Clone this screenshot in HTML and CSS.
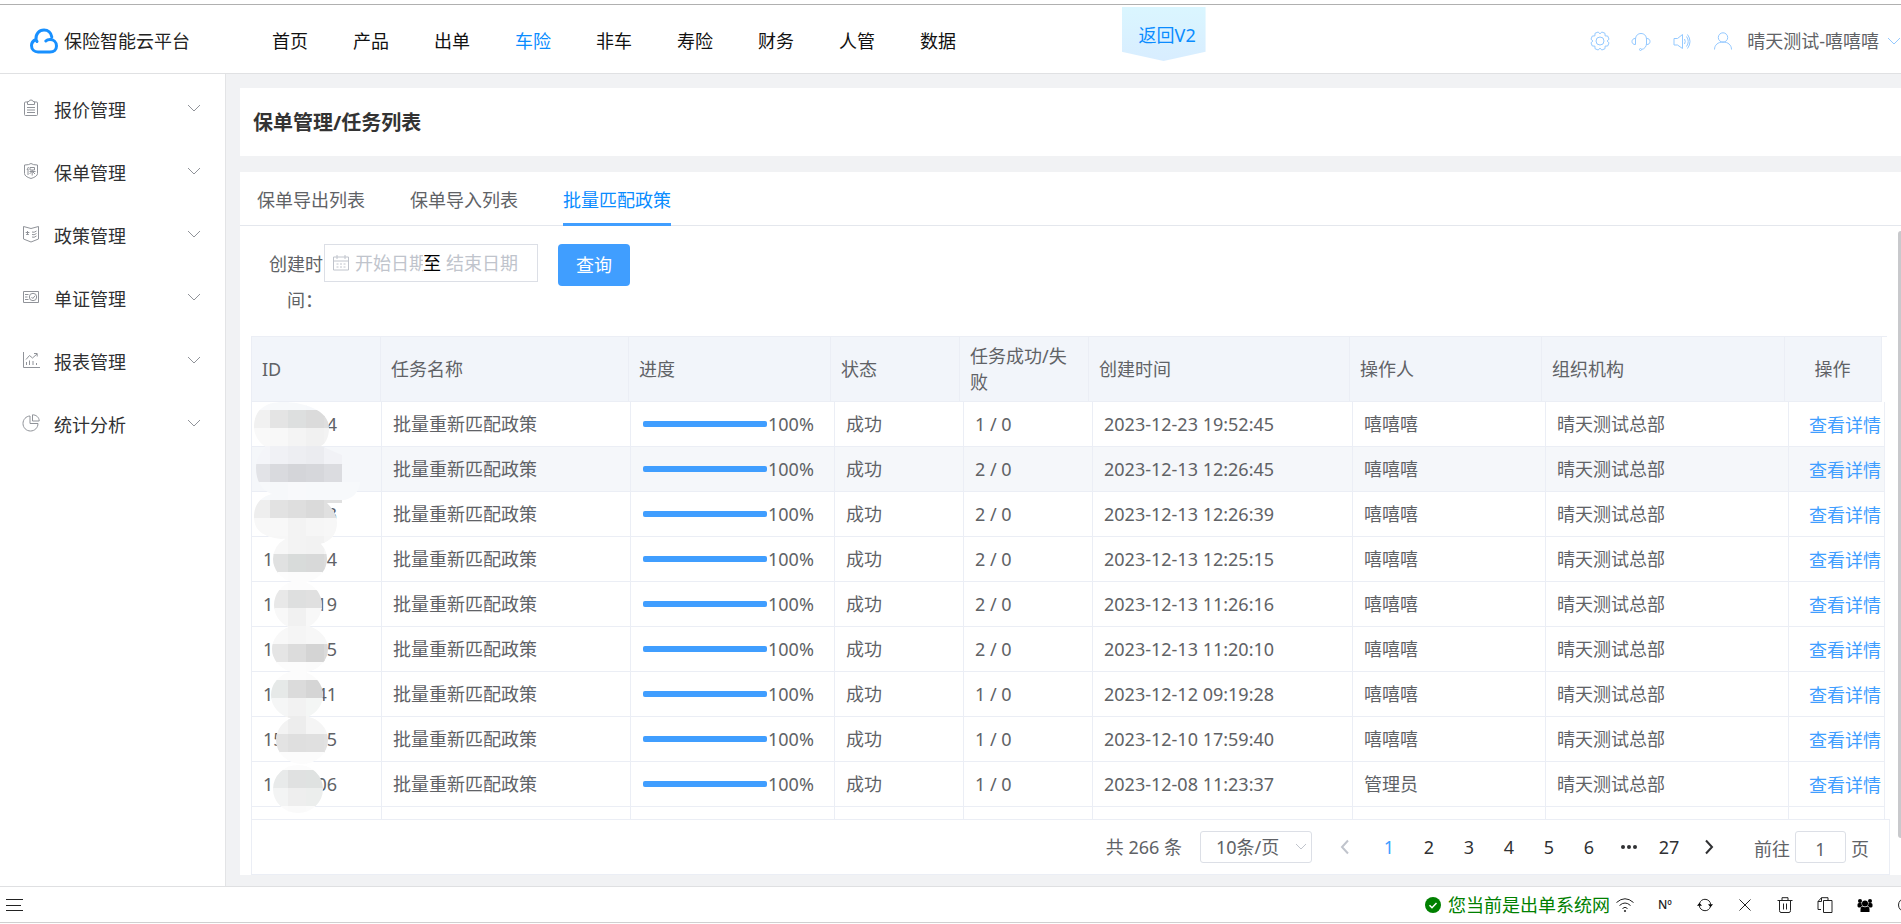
FILE: index.html
```
<!DOCTYPE html>
<html lang="zh-CN">
<head>
    <meta charset="UTF-8">
    <meta name="viewport" content="width=device-width, initial-scale=1.0">
    <title>保险智能云平台</title>
    <link rel="stylesheet" href="styles.css">
</head>
<body>

    <!-- Header -->
    <header class="header">
        <a class="logo" href="#">
            <svg width="28" height="26" viewBox="0 0 28 26">
                <path d="M6 11.500C2.500 13 1.500 15.500 1.500 17.500c0 4 3 6.500 6.500 6.500h12c4 0 6.500-2.500 6.500-6 0-4-3-6.500-6.500-6.500-2 0-3.200.5-4.200 1.500M6 11.500C5.500 6 9 2 14 2c4 0 7.200 2.800 7.800 7M6 11.500c.3 1 .6 1.500 1 2"/>
            </svg>
            <span>保险智能云平台</span>
        </a>
        <nav class="nav">
            <a href="#">首页</a>
            <a href="#">产品</a>
            <a href="#">出单</a>
            <a href="#" class="active">车险</a>
            <a href="#">非车</a>
            <a href="#">寿险</a>
            <a href="#">财务</a>
            <a href="#">人管</a>
            <a href="#">数据</a>
        </nav>
        <a class="back-v2" href="#">返回V2</a>
        <div class="user-bar">
            <button type="button" aria-label="设置">
                <svg width="20" height="20" viewBox="0 0 20 20">
                    <path d="M10 2.800L11.900 1 15 2.300l.1 2.600 2.600.1L19 8.100 17.200 10l1.800 1.900-1.300 3.100-2.600.1-.1 2.600-3.100 1.300-1.900-1.800L8.100 19 5 17.700l-.1-2.600-2.600-.1L1 11.900 2.800 10 1 8.100 2.300 5l2.600-.1.1-2.600L8.100 1z"/>
                    <circle cx="10" cy="10" r="4"/>
                </svg>
            </button>
            <button type="button" aria-label="客服">
                <svg width="20" height="20" viewBox="0 0 20 20">
                    <path d="M4.500 8.500C4.500 4.500 7 2.500 10 2.500s5.500 2 5.500 6v4c0 3-2 5.500-5 6M4.500 7.500H4c-1.500 0-3 1-3 3s1.500 3 3 3h.5zM15.500 7.500h.5c1.500 0 3 1 3 3s-1.500 3-3 3h-.5z"/>
                    <circle cx="9.500" cy="18.500" r="1"/>
                </svg>
            </button>
            <button type="button" aria-label="公告">
                <svg width="20" height="20" viewBox="0 0 20 20">
                    <path d="M2 7.500h3.500L10.500 3.500v14l-5-3.500H2zM12.500 8q1.500 2.500 0 5M14.500 5.500q3.500 5 0 10M15.500 3.500q5 7 0 14"/>
                </svg>
            </button>
            <button type="button" class="user">
                <svg width="20" height="20" viewBox="0 0 20 20">
                    <circle cx="10" cy="6.500" r="4.700"/>
                    <path d="M1.500 18.500c0-4.500 3.500-7.500 8.500-7.500s8.500 3 8.500 7.500"/>
                </svg>
                <span>晴天测试-嘻嘻嘻</span>
                <svg width="14" height="14" viewBox="0 0 14 14"><path d="M1 4l6 6 6-6"/></svg>
            </button>
        </div>
    </header>

    <div class="layout">
        <!-- Side menu -->
        <aside class="sidebar">
            <a href="#">
                <svg width="18" height="18" viewBox="0 0 18 18"><path d="M5 3H3.500Q2.500 3 2.500 4v11.500q0 1 1 1h11q1 0 1-1V4q0-1-1-1H13M5.500 2.500H7q0-1.500 2-1.500t2 1.500h1.500v3h-7zM5 8.500h8M5 11h8M5 13.500h8"/></svg>
                <span>报价管理</span>
                <svg class="arrow" width="14" height="14" viewBox="0 0 14 14"><path d="M1 4l6 6 6-6"/></svg>
            </a>
            <a href="#">
                <svg width="18" height="18" viewBox="0 0 18 18"><path d="M2.500 3Q7 3 9 1.500 11 3 15.500 3v8.500q0 3-6.500 5-6.500-2-6.500-5zM6.500 5L5 8M6 7v6M8 5.500h4.500V8H8zM7.500 9.500h6M10.200 8v5.500M10 9.500L7.500 12M10.500 9.500L13 12"/></svg>
                <span>保单管理</span>
                <svg class="arrow" width="14" height="14" viewBox="0 0 14 14"><path d="M1 4l6 6 6-6"/></svg>
            </a>
            <a href="#">
                <svg width="18" height="18" viewBox="0 0 18 18"><path d="M9 3.500L1.500 1.500v12.500L9 17l7.500-3V1.500L9 3.500M5.500 6v4M3.700 7.500h3.600M4.300 10l1.200-1.500L6.700 10M10 7q2 1 4.500-1M10 9.500q2 1 4.500-1M10 12q2 1 4.500-1"/></svg>
                <span>政策管理</span>
                <svg class="arrow" width="14" height="14" viewBox="0 0 14 14"><path d="M1 4l6 6 6-6"/></svg>
            </a>
            <a href="#">
                <svg width="18" height="18" viewBox="0 0 18 18"><path d="M1.500 3.500h15v11h-15zM3 6.500h3.500M3 9h2.500M3 11.500h3.500M9.500 9l1.300 1.500L13 7.800"/><circle cx="11" cy="9" r="3.700"/></svg>
                <span>单证管理</span>
                <svg class="arrow" width="14" height="14" viewBox="0 0 14 14"><path d="M1 4l6 6 6-6"/></svg>
            </a>
            <a href="#">
                <svg width="18" height="18" viewBox="0 0 18 18"><path d="M1.500 1v15.500H18M4.500 14v-3M7.500 14V9.500M11 14v-4M14.500 14v-2M4 8.500l3.500-4 3 2.500L15 3M12 2.500h3.200v3"/></svg>
                <span>报表管理</span>
                <svg class="arrow" width="14" height="14" viewBox="0 0 14 14"><path d="M1 4l6 6 6-6"/></svg>
            </a>
            <a href="#">
                <svg width="18" height="18" viewBox="0 0 18 18"><path d="M8 2C4 2.200 1 5.500 1 9.500 1 13.700 4.300 17 8.500 17s7.500-3.300 7.500-7.500H8zM10.500.8V7h6.700c0-3.700-3-6.200-6.700-6.200z"/></svg>
                <span>统计分析</span>
                <svg class="arrow" width="14" height="14" viewBox="0 0 14 14"><path d="M1 4l6 6 6-6"/></svg>
            </a>
        </aside>

        <main class="main">
            <h1 class="page-title">保单管理/任务列表</h1>

            <section class="card">
                <div class="tabs">
                    <a href="#">保单导出列表</a>
                    <a href="#">保单导入列表</a>
                    <a href="#" class="active">批量匹配政策</a>
                </div>

                <form class="search-form">
                    <label for="startDate">创建时间：</label>
                    <div class="date-range">
                        <svg width="18" height="18" viewBox="0 0 18 18"><path d="M1.500 3h15v13h-15zM1.500 7h15M5 1v4M13 1v4M4.500 10h2M8 10h2M11.500 10h2M4.500 13h2M8 13h2M11.500 13h2"/></svg>
                        <input type="text" id="startDate" placeholder="开始日期">
                        <span>至</span>
                        <input type="text" id="endDate" placeholder="结束日期" aria-label="结束日期">
                    </div>
                    <button type="button" class="btn-primary">查询</button>
                </form>

                <div class="table-box">
                    <table class="table-head">
                        <colgroup>
                            <col class="h-id"><col class="h-name"><col class="h-progress"><col class="h-status"><col class="h-count"><col class="h-time"><col class="h-user"><col class="h-org"><col class="h-action">
                        </colgroup>
                        <thead>
                            <tr>
                                <th>ID</th>
                                <th>任务名称</th>
                                <th>进度</th>
                                <th>状态</th>
                                <th>任务成功/失败</th>
                                <th>创建时间</th>
                                <th>操作人</th>
                                <th>组织机构</th>
                                <th class="center">操作</th>
                            </tr>
                        </thead>
                    </table>
                    <div class="table-scroll">
                        <table class="table-body">
                            <colgroup>
                                <col class="b-id"><col class="b-name"><col class="b-progress"><col class="b-status"><col class="b-count"><col class="b-time"><col class="b-user"><col class="b-org"><col class="b-action">
                            </colgroup>
                            <tbody id="taskRows"></tbody>
                        </table>
                        <svg class="mask" id="idMask" width="130" height="418" viewBox="0 0 130 418" aria-hidden="true">
                            <clipPath id="maskShape">
                                <path d="M3 25C3 8 14 0 32 0 52 0 78 8 78 26c0 10-4 16-8 18l21 9v9q14 2 18 19c-1 9-8 17-18 17v3H76c6 6 10 12 10 20 0 12-8 20-18 21-12-4-28-6-38-5C12 135 3 128 3 115c0-12 6-20 18-23C10 88 5 78 5 66c0-9 4-16 10-21C8 41 3 33 3 25z"/>
                                <ellipse cx="49" cy="157" rx="27" ry="24"/>
                                <ellipse cx="47" cy="203" rx="24" ry="24"/>
                                <ellipse cx="49" cy="247" rx="28" ry="24"/>
                                <ellipse cx="46" cy="293" rx="26" ry="24"/>
                                <ellipse cx="51" cy="338" rx="26" ry="24"/>
                                <ellipse cx="47" cy="387" rx="25" ry="24"/>
                            </clipPath>
                            <g id="maskBlocks" clip-path="url(#maskShape)"></g>
                        </svg>
                    </div>
                </div>

                <div class="pagination">
                    <span class="total">共 266 条</span>
                    <div class="page-size">
                        <select aria-label="每页条数">
                            <option>10条/页</option>
                            <option>20条/页</option>
                            <option>50条/页</option>
                        </select>
                        <svg width="12" height="12" viewBox="0 0 12 12"><path d="M1 3l5 5 5-5"/></svg>
                    </div>
                    <div class="pager">
                        <button type="button" class="disabled" aria-label="上一页"><svg width="12" height="16" viewBox="0 0 12 16"><path d="M9 1.500L3 8l6 6.500"/></svg></button>
                        <button type="button" class="active">1</button>
                        <button type="button">2</button>
                        <button type="button">3</button>
                        <button type="button">4</button>
                        <button type="button">5</button>
                        <button type="button">6</button>
                        <button type="button" aria-label="更多"><svg class="dots" width="18" height="6" viewBox="0 0 18 6"><circle cx="3" cy="3" r="2"/><circle cx="9" cy="3" r="2"/><circle cx="15" cy="3" r="2"/></svg></button>
                        <button type="button">27</button>
                        <button type="button" aria-label="下一页"><svg width="12" height="16" viewBox="0 0 12 16"><path d="M3 1.500L9 8l-6 6.500"/></svg></button>
                    </div>
                    <div class="jump">
                        <label for="jumpPage">前往</label>
                        <input type="text" id="jumpPage" value="1">
                        <span>页</span>
                    </div>
                </div>
                <div class="scrollbar"></div>
            </section>
        </main>
    </div>

    <!-- Status bar -->
    <footer class="footer">
        <button type="button" class="menu-btn" aria-label="菜单">
            <svg width="18" height="14" viewBox="0 0 18 14"><path d="M0 1.500h17M0 7.500h15M0 12.500h17"/></svg>
        </button>
        <div class="net">
            <svg width="16" height="16" viewBox="0 0 16 16"><circle cx="8" cy="8" r="8" fill="#008000"/><path d="M4.500 8.200l2.500 2.500L11.500 6" fill="none" stroke="#fff" stroke-width="1.500"/></svg>
            <span>您当前是出单系统网</span>
        </div>
        <div class="tools">
            <button type="button" aria-label="网络"><svg width="18" height="16" viewBox="0 0 18 16"><path d="M.5 5.500Q9-2 17.500 5.500M3.500 8.500Q9 3.500 14.500 8.500M6.500 11.500Q9 9 11.500 11.500"/><circle cx="9" cy="14" r=".7"/></svg></button>
            <button type="button" class="number">Nº</button>
            <button type="button" aria-label="刷新"><svg class="refresh" width="16" height="16" viewBox="0 0 16 16"><path d="M2.500 6.500C3.500 3.500 5.500 2.300 8 2.300c3 0 5.500 2.200 5.700 5.200M13.500 9.500c-1 3-3 4.200-5.500 4.200-3 0-5.500-2.200-5.700-5.200"/><path class="solid" d="M11 7.200h5l-2.500 3zM0 8.800h5l-2.500-3z"/></svg></button>
            <button type="button" aria-label="关闭"><svg width="16" height="16" viewBox="0 0 16 16"><path d="M2.500 2.500l11 11M13.500 2.500l-11 11"/></svg></button>
            <button type="button" aria-label="删除"><svg width="16" height="16" viewBox="0 0 16 16"><path d="M.5 3.500h15M5 3V.700h6V3M2.500 3.500v10q0 2 1.500 2h8q1.500 0 1.500-2v-10M6.500 6.500v6M9.500 6.500v6"/></svg></button>
            <button type="button" aria-label="复制"><svg width="16" height="16" viewBox="0 0 16 16"><path d="M6.500 3.500h8.500v12H6.500zM4 12.500H1v-8L4.500.700h6.500v2.500M1 4.500h3.500V.7"/></svg></button>
            <button type="button" aria-label="用户"><svg width="16" height="16" viewBox="0 0 16 16" class="fill"><circle cx="8" cy="6.500" r="3"/><circle cx="3" cy="4" r="2"/><circle cx="13" cy="4" r="2"/><path d="M3.500 15v-3q0-2.500 2-2.500 2.500 1.500 5 0 2 0 2 2.500v3zM.5 9.500v-2q0-1.500 1.500-1.500h2.500q0 2 1 3-1.500 0-2 1.500H1.500zM15.500 9.500v-2q0-1.500-1.500-1.500h-2.500q0 2-1 3 1.500 0 2 1.500h2z"/></svg></button>
            <button type="button" aria-label="帮助"><svg width="16" height="16" viewBox="0 0 16 16"><circle cx="8" cy="8" r="6.500"/></svg></button>
        </div>
    </footer>

    <script src="script.js"></script>
</body>
</html>
```

FILE: styles.css
```
* {
    box-sizing: border-box;
}
body {
    font-family: "Noto Sans", "Noto Sans CJK SC", sans-serif;
    font-size: 18px;
    line-height: 26px;
    margin: 0;
    padding: 4px 0 1px;
    height: 100vh;
    display: flex;
    flex-direction: column;
    color: #606266;
    background: white;
    overflow: hidden;
}
a {
    color: inherit;
    text-decoration: none;
}
button, input, select {
    font: inherit;
    color: inherit;
    background: none;
    border: none;
    margin: 0;
    padding: 0;
}
button {
    cursor: pointer;
}
svg {
    display: block;
    flex: none;
    fill: none;
    stroke: currentColor;
}

/* header */
.header {
    position: relative;
    flex: none;
    display: flex;
    align-items: center;
    height: 70px;
    padding-left: 30px;
    padding-top: 4px;
    border-top: 1px solid #b0b0b0;
    border-bottom: 1px solid #e0e1e3;
    white-space: nowrap;
}
.logo {
    display: flex;
    align-items: center;
    gap: 6px;
    color: #222;
}
.logo svg {
    stroke: #1890ff;
    stroke-width: 3;
    stroke-linecap: round;
    stroke-linejoin: round;
}
.nav {
    display: flex;
    gap: 45px;
    margin-left: 82px;
    color: #111;
}
.nav .active {
    color: #0a8cff;
}
.back-v2 {
    position: absolute;
    left: 59%;
    top: 2px;
    width: 84px;
    height: 54px;
    line-height: 56px;
    padding-left: 17px;
    color: #0a8cff;
    background: linear-gradient(#daf6ff, #d8edff);
    clip-path: polygon(0 0, 100% 0, 100% 83%, 50% 100%, 0 83%);
}
.user-bar {
    display: flex;
    align-items: center;
    gap: 21px;
    margin-left: auto;
    color: #94c9ff;
}
.user {
    display: flex;
    align-items: center;
    gap: 8px;
}
.user span {
    margin-left: 6px;
    color: #606266;
}

/* layout */
.layout {
    flex: 1;
    display: flex;
    min-height: 0;
    background: #f1f2f4;
}
.sidebar {
    width: 226px;
    flex: none;
    padding-top: 4px;
    background: white;
    border-right: 1px solid #e3e4e6;
}
.sidebar a {
    display: flex;
    align-items: center;
    height: 63px;
    padding: 0 24px 0 22px;
    gap: 14px;
    color: #303133;
}
.sidebar svg {
    margin-bottom: 4px;
    color: #909399;
}
.sidebar .arrow {
    margin-left: auto;
}
.main {
    flex: 1;
    min-width: 0;
    display: flex;
    flex-direction: column;
    padding: 14px 0 11px 14px;
}
.page-title {
    margin: 0 0 16px;
    padding: 22px 13px 20px;
    font-size: 20px;
    line-height: 26px;
    font-weight: bold;
    color: #333;
    background: white;
}
.card {
    position: relative;
    flex: 1;
    min-height: 0;
    display: flex;
    flex-direction: column;
    background: white;
}
.tabs {
    display: flex;
    gap: 45px;
    height: 54px;
    padding-left: 17px;
    border-bottom: 1px solid #e4e7ed;
    line-height: 56px;
}
.tabs a {
    height: 54px;
}
.tabs .active {
    color: #0a8cff;
    border-bottom: 3px solid #409eff;
}

/* search */
.search-form {
    display: flex;
    align-items: flex-start;
    padding: 18px 11px;
}
.search-form label {
    width: 60px;
    margin: 0 1px 0 12px;
    padding-top: 2px;
    line-height: 36px;
    text-align: right;
}
.date-range {
    display: flex;
    align-items: center;
    width: 214px;
    height: 38px;
    padding-left: 7px;
    border: 1px solid #dcdfe6;
    color: #c0c4cc;
}
.date-range input {
    width: 68px;
    margin-left: 5px;
    outline: none;
    color: #606266;
}
.date-range input:last-child {
    width: 80px;
}
.date-range input::placeholder {
    color: #c0c4cc;
    opacity: 1;
}
.date-range span {
    color: #000;
}
.btn-primary {
    width: 72px;
    height: 42px;
    margin-left: 20px;
    border-radius: 4px;
    color: white;
    background: #409eff;
}

/* table */
.table-box {
    flex: 1;
    min-height: 0;
    display: flex;
    flex-direction: column;
    margin: 0 14px 0 11px;
    border: 1px solid #ebeef5;
    border-width: 1px 0 0 1px;
}
table {
    table-layout: fixed;
    border-collapse: separate;
    border-spacing: 0;
}
.table-head {
    flex: none;
    width: calc(100% - 5px);
    background: #f2f5fa;
}
.table-body {
    width: calc(100% - 2px);
}
th, td {
    padding: 0 11px;
    border-right: 1px solid #ebeef5;
    border-bottom: 1px solid #ebeef5;
    font-weight: normal;
    text-align: left;
}
th {
    height: 65px;
    padding-left: 10px;
}
th.center {
    text-align: center;
}
td {
    height: 45px;
    white-space: nowrap;
}
.h-id, .h-status, .h-count, .b-status, .b-count {
    width: 129px;
}
.h-name {
    width: 248px;
}
.h-progress {
    width: 202px;
}
.h-time {
    width: 261px;
}
.h-user {
    width: 192px;
}
.h-org, .b-org {
    width: 243px;
}
.h-action {
    width: 97px;
}
.b-id {
    width: 130px;
}
.b-name {
    width: 249px;
}
.b-progress {
    width: 204px;
}
.b-time {
    width: 260px;
}
.b-user {
    width: 193px;
}
.b-action {
    width: 96px;
}
.table-scroll {
    position: relative;
    flex: 1;
    min-height: 0;
    overflow: hidden;
}
.table-body .hover {
    background: #f5f7fa;
}
.task-id {
    display: flex;
    justify-content: space-between;
    width: 74px;
}
.progress {
    display: flex;
    align-items: center;
    gap: 1px;
    padding-left: 1px;
}
.progress-bar {
    width: 124px;
    height: 6px;
    border-radius: 2px;
    background: #ebeef5;
}
.progress-bar div {
    height: 100%;
    border-radius: 2px;
    background: #409eff;
}
.action {
    padding: 2px 0 0 20px;
    color: #409eff;
}
/* covers the hidden part of the ids */
.mask {
    position: absolute;
    left: -1px;
    top: 0;
    stroke: none;
}

/* pagination */
.pagination {
    flex: none;
    display: flex;
    align-items: center;
    justify-content: flex-end;
    height: 56px;
    margin: 0 11px;
    padding-right: 20px;
    border: 1px solid #ebeef5;
}
.page-size {
    position: relative;
    margin-left: 18px;
}
.page-size select {
    appearance: none;
    width: 112px;
    height: 32px;
    padding-left: 15px;
    border: 1px solid #dcdfe6;
    border-radius: 3px;
}
.page-size svg {
    position: absolute;
    right: 5px;
    top: 10px;
    color: #c0c4cc;
    pointer-events: none;
}
.pager {
    display: flex;
    margin-left: 13px;
    color: #303133;
}
.pager button {
    display: flex;
    align-items: center;
    justify-content: center;
    width: 40px;
    height: 32px;
}
.pager svg {
    stroke-width: 2;
}
.pager .dots {
    fill: currentColor;
    stroke: none;
}
.pager .active {
    color: #409eff;
}
.pager .disabled {
    margin-right: 4px;
    color: #c0c4cc;
}
.jump {
    display: flex;
    align-items: center;
    gap: 5px;
    margin-left: 25px;
}
.jump label, .jump span, .jump input {
    padding-top: 4px;
}
.jump input {
    width: 51px;
    height: 32px;
    border: 1px solid #dcdfe6;
    border-radius: 3px;
    text-align: center;
}
.scrollbar {
    position: absolute;
    right: 0;
    top: 59px;
    bottom: 37px;
    width: 3px;
    border-radius: 3px 0 0 3px;
    background: #c8c9cc;
}

/* footer */
.footer {
    flex: none;
    display: flex;
    align-items: center;
    height: 37px;
    padding-left: 6px;
    border-top: 1px solid #dfe0e2;
    border-bottom: 1px solid #d0d0d0;
    color: #222;
    white-space: nowrap;
    overflow: hidden;
}
.net {
    display: flex;
    align-items: center;
    gap: 7px;
    margin-left: auto;
    color: #008000;
}
.net svg {
    stroke: none;
}
.tools {
    display: flex;
    margin-left: -5px;
    margin-right: -24px;
}
.tools button {
    display: flex;
    align-items: center;
    justify-content: center;
    width: 40px;
    height: 34px;
}
.tools .number {
    font-size: 12px;
    font-weight: 500;
}
.tools .solid, .tools .fill {
    fill: #000;
    stroke: none;
}
```

FILE: script.js
```
const tasks = [
    { id: ["", "4"], count: "1 / 0", time: "2023-12-23 19:52:45", user: "嘻嘻嘻" },
    { id: ["", ""], count: "2 / 0", time: "2023-12-13 12:26:45", user: "嘻嘻嘻", hover: true },
    { id: ["", "3"], count: "2 / 0", time: "2023-12-13 12:26:39", user: "嘻嘻嘻" },
    { id: ["1", "04"], count: "2 / 0", time: "2023-12-13 12:25:15", user: "嘻嘻嘻" },
    { id: ["1", "19"], count: "2 / 0", time: "2023-12-13 11:26:16", user: "嘻嘻嘻" },
    { id: ["1", "5"], count: "2 / 0", time: "2023-12-13 11:20:10", user: "嘻嘻嘻" },
    { id: ["1", "41"], count: "1 / 0", time: "2023-12-12 09:19:28", user: "嘻嘻嘻" },
    { id: ["15", "5"], count: "1 / 0", time: "2023-12-10 17:59:40", user: "嘻嘻嘻" },
    { id: ["1", "06"], count: "1 / 0", time: "2023-12-08 11:23:37", user: "管理员" }
];

let html = "";
tasks.forEach(task => {
    html += `<tr class="${task.hover ? "hover" : ""}">
        <td><div class="task-id"><span>${task.id[0]}</span><span>${task.id[1]}</span></div></td>
        <td>批量重新匹配政策</td>
        <td><div class="progress"><div class="progress-bar"><div style="width: 100%"></div></div><span>100%</span></div></td>
        <td>成功</td>
        <td>${task.count}</td>
        <td>${task.time}</td>
        <td>${task.user}</td>
        <td>晴天测试总部</td>
        <td class="action"><a href="#">查看详情</a></td>
    </tr>`;
});
html += "<tr>" + "<td></td>".repeat(9) + "</tr>";
document.getElementById("taskRows").innerHTML = html;

// mosaic: top of each band, then the colour of each 18px block
const bands = [
    [-10, "#f8f9fb", "#f7f9fb", "#f7f9fb", "#f6f8fb", "#f8f9fb", "#fff"],
    [8, "#f1f1f1", "#e4e4e4", "#dddfdf", "#dbdbdb", "#dedede", "#fff"],
    [26, "#f9f9f9", "#f8f8f8", "#f4f4f4", "#f1f1f1", "#f3f3f3", "#fff"],
    [44, "#f4f5f9", "#f0f1f5", "#edeef2", "#ebecf0", "#f1f2f6", "#f4f6fa"],
    [62, "#e2e3e7", "#d9dade", "#d4d5d9", "#d6d7db", "#dbdce0", "#f5f7fa"],
    [80, "#f7f9fb", "#f6f8fa", "#f8f9fb", "#f7f9fb", "#f7f9fb", "#f7f9fb"],
    [98, "#eeeeee", "#e2e2e2", "#dedede", "#dadada", "#e0e0e0", "#fff"],
    [116, "#f8f8f8", "#f8f8f8", "#f3f3f3", "#f6f6f6", "#f7f7f7", "#fff"],
    [134, "#fafafa", "#f7f7f7", "#f3f3f3", "#f2f2f2", "#f6f6f6", "#fff"],
    [152, "#e4e5e5", "#e0e1e1", "#d8dbda", "#d8d9d9", "#dcdcdc", "#fff"],
    [170, "#fdfdfd", "#fdfdfd", "#fcfcfc", "#fcfcfc", "#fdfdfd", "#fff"],
    [188, "#eaeaea", "#e8e8e8", "#dedfdf", "#e0e0e0", "#dddddd", "#fff"],
    [206, "#f8f8f8", "#f8f8f8", "#f1f1f1", "#f8f8f8", "#f8f8f8", "#fff"],
    [224, "#f8f8f8", "#f8f8f8", "#f5f5f5", "#f7f7f7", "#f7f7f7", "#fff"],
    [242, "#e7e7e7", "#e5e5e5", "#dcdcdc", "#d4d4d4", "#dadada", "#fff"],
    [260, "#fcfcfc", "#fcfcfc", "#fcfcfc", "#fbfbfb", "#fcfcfc", "#fff"],
    [278, "#e8eaea", "#e6e9e8", "#dbdbdb", "#d5d5d5", "#dadada", "#fff"],
    [296, "#f5f6f6", "#f5f6f6", "#f2f2f2", "#f4f6f5", "#f6f6f6", "#fff"],
    [314, "#f5f5f5", "#f3f3f3", "#ededed", "#f5f5f5", "#f6f6f6", "#fff"],
    [332, "#e6e6e6", "#e3e3e3", "#dfdfdf", "#e0e0e0", "#e2e2e2", "#fff"],
    [350, "#fcfcfc", "#fcfcfc", "#fcfcfc", "#fcfcfc", "#fcfcfc", "#fff"],
    [368, "#ebecec", "#e8eaea", "#e0e1e1", "#dfe2e1", "#e2e2e2", "#fff"],
    [386, "#f3f4f4", "#f3f4f4", "#eeeeee", "#eceeed", "#f2f2f2", "#fff"],
    [404, "#fbfbfb", "#fbfbfb", "#fafafa", "#fbfbfb", "#fbfbfb", "#fff"]
];

let blocks = "";
bands.forEach(([top, ...colors]) => {
    colors.forEach((color, i) => {
        blocks += `<rect x="${i * 18 + 1}" y="${top}" width="19" height="19" fill="${color}"/>`;
    });
});
document.getElementById("maskBlocks").innerHTML = blocks;
```
